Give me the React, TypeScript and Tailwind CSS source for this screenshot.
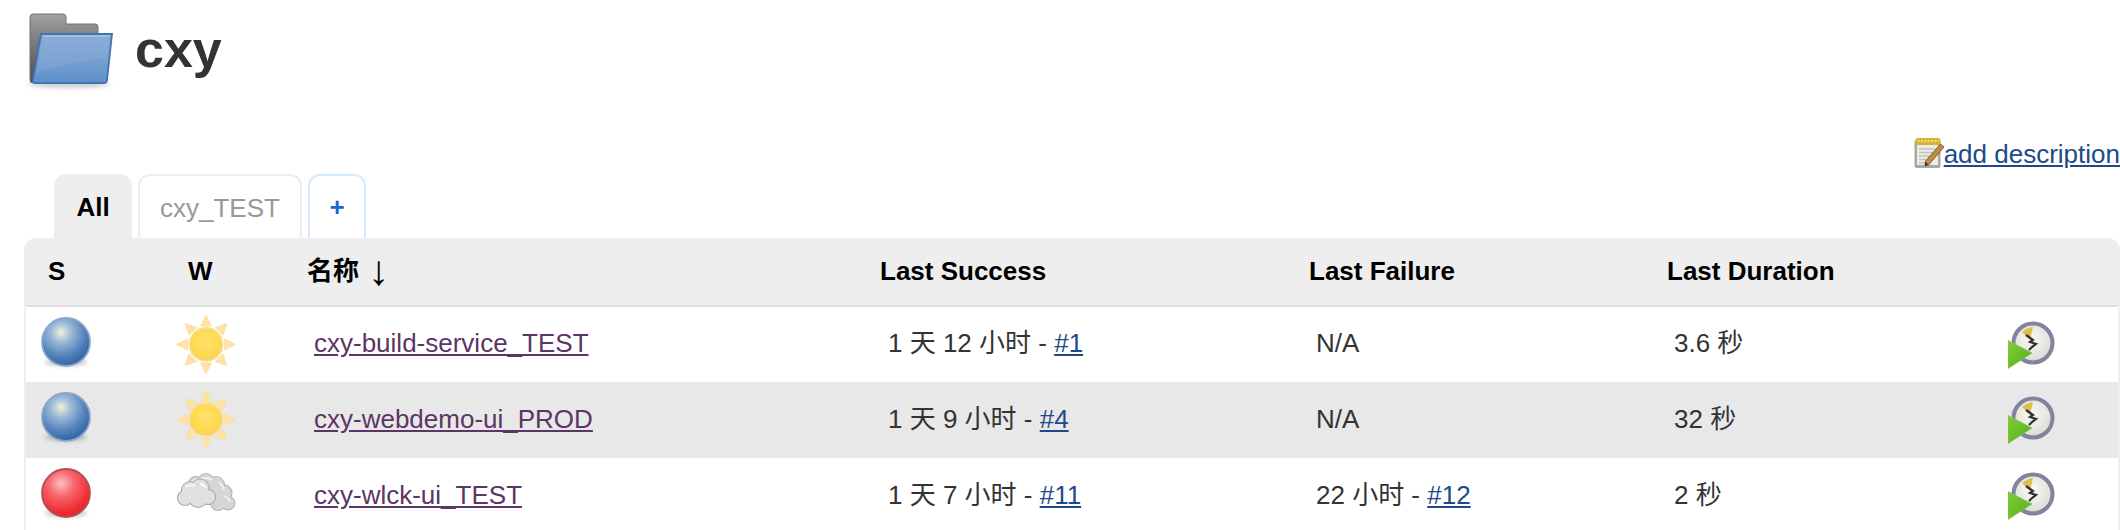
import React, { useId } from "react";

function Blur({ id, d = 0.5 }: { id: string; d?: number }) {
  return (
    <filter id={id} x="-10%" y="-10%" width="120%" height="120%">
      <feGaussianBlur stdDeviation={d} />
    </filter>
  );
}

function FolderIcon() {
  const id = useId();
  return (
    <svg width="92" height="84" viewBox="0 0 92 84" className="block shrink-0">
      <defs>
        <linearGradient id={id + "b"} x1="0" y1="0" x2="0" y2="1">
          <stop offset="0" stopColor="#a2a2a2" />
          <stop offset="0.35" stopColor="#808080" />
          <stop offset="1" stopColor="#4f4f4f" />
        </linearGradient>
        <linearGradient id={id + "f"} x1="0" y1="0" x2="0" y2="1">
          <stop offset="0" stopColor="#81a8d5" />
          <stop offset="0.6" stopColor="#739dd0" />
          <stop offset="1" stopColor="#5f8fc9" />
        </linearGradient>
        <filter id={id + "s"} x="-20%" y="-100%" width="140%" height="300%">
          <feGaussianBlur stdDeviation="2.500" />
        </filter>
        <Blur id={id + "g"} d={0.5} />
      </defs>
      <ellipse cx="46" cy="73" rx="42" ry="3.500" fill="#000" opacity="0.22" filter={`url(#${id}s)`} />
      <g filter={`url(#${id}g)`}>
        <path d="M7 6 Q7 3 10 3 H40 Q43 3 43 6 V13 H72 Q75 13 75 16 V40 L11 72 H10 Q7 72 7 69 Z" fill={`url(#${id}b)`} stroke="#707070" strokeWidth="1" />
        <path d="M18 23 H89 L84 69 Q83.500 72 81 72 H12 Q9 72 10 69 Z" fill={`url(#${id}f)`} stroke="#4273b3" strokeWidth="1.800" />
        <path d="M20 25 H87 L84.500 47 Q50 50 13 62 Z" fill="#fff" opacity="0.07" />
        <path d="M20 25 H87" stroke="#bcd2ea" strokeWidth="1.200" fill="none" />
      </g>
    </svg>
  );
}

function NoteIcon() {
  const id = useId();
  return (
    <svg width="30" height="32" viewBox="0 0 30 32" className="inline-block shrink-0 align-[-6px]">
      <defs>
        <Blur id={id + "g"} d={0.35} />
      </defs>
      <g filter={`url(#${id}g)`}>
        <rect x="0.500" y="3" width="26" height="28" rx="2" fill="#a8a8a2" />
        <rect x="3" y="6" width="21" height="22" fill="#ecece8" />
        <path d="M5 12 H22 M5 15.500 H20 M5 19 H16 M5 22.500 H12 M5 26 H12" stroke="#c2c2bc" strokeWidth="1.300" />
        <rect x="1.500" y="1" width="25" height="7" rx="2.500" fill="#d9ae34" />
        <path d="M3.500 4 H25" stroke="#f3dc7c" strokeWidth="2.500" strokeDasharray="2 1.400" />
        <path d="M26.500 7 L30 10 L15 27.500 L11 29 L11.500 24 Z" fill="#c18b3f" stroke="#6f4b1c" strokeWidth="0.800" />
        <path d="M11 29 L11.500 25 L14.500 27.500 Z" fill="#3a2c18" />
      </g>
    </svg>
  );
}

function Ball({ color }: { color: "blue" | "red" }) {
  const id = useId();
  const blue = color === "blue";
  return (
    <svg width="60" height="60" viewBox="0 0 60 60" className="block">
      <defs>
        <radialGradient id={id + "r"} cx="0.4" cy="0.3" r="0.75">
          {blue ? (
            <>
              <stop offset="0" stopColor="#eef2d6" />
              <stop offset="0.28" stopColor="#9db9d8" />
              <stop offset="0.65" stopColor="#5484bc" />
              <stop offset="1" stopColor="#2c5c9e" />
            </>
          ) : (
            <>
              <stop offset="0" stopColor="#fcc0c4" />
              <stop offset="0.35" stopColor="#f8686f" />
              <stop offset="0.8" stopColor="#f02c33" />
              <stop offset="1" stopColor="#dc252c" />
            </>
          )}
        </radialGradient>
        <filter id={id + "s"} x="-20%" y="-100%" width="140%" height="300%">
          <feGaussianBlur stdDeviation="2" />
        </filter>
        <Blur id={id + "g"} d={0.45} />
      </defs>
      <ellipse cx="30" cy="47" rx="21" ry="4" fill="#000" opacity="0.22" filter={`url(#${id}s)`} />
      <circle cx="30" cy="27" r="24" fill={`url(#${id}r)`} stroke={blue ? "#8aa6cc" : "#ae5156"} strokeWidth="1.800" filter={`url(#${id}g)`} />
    </svg>
  );
}

function Sun() {
  const id = useId();
  const rays = [0, 45, 90, 135, 180, 225, 270, 315];
  return (
    <svg width="60" height="60" viewBox="0 0 60 60" className="block">
      <defs>
        <radialGradient id={id + "r"} cx="0.5" cy="0.42" r="0.58">
          <stop offset="0" stopColor="#ffe26a" />
          <stop offset="0.75" stopColor="#fed94f" />
          <stop offset="1" stopColor="#fbc95c" />
        </radialGradient>
        <Blur id={id + "g"} d={0.55} />
      </defs>
      <g filter={`url(#${id}g)`}>
        {rays.map((a) => (
          <path key={a} d="M24.500 11 L30 0 L35.500 11 Z" fill="#fde3a6" stroke="#fcdc9c" strokeWidth="0.800" transform={`rotate(${a} 30 29.500)`} />
        ))}
        <circle cx="30" cy="29.500" r="16.500" fill={`url(#${id}r)`} stroke="#fbdc94" strokeWidth="1.800" />
      </g>
    </svg>
  );
}

function Cloud() {
  const id = useId();
  const back = [[30, 16, 8], [20, 18, 7], [40, 19, 8], [48, 27, 7.5], [52, 37, 6.5], [34, 26, 12], [42, 37, 7]];
  const front = [[9, 32, 7], [14, 24, 8], [24, 22, 8.5], [32, 31, 7], [22, 32, 9]];
  return (
    <svg width="60" height="60" viewBox="0 0 60 60" className="block">
      <defs>
        <Blur id={id + "g"} d={0.6} />
      </defs>
      <g filter={`url(#${id}g)`}>
        <g stroke="#b0b0ae" strokeWidth="2" fill="#b0b0ae">
          {back.map((c, i) => <circle key={i} cx={c[0]} cy={c[1]} r={c[2]} />)}
        </g>
        <g fill="#d6d6d4">
          {back.map((c, i) => <circle key={i} cx={c[0]} cy={c[1]} r={c[2]} />)}
        </g>
        <path d="M24 14 Q30 10 36 14 M42 16 Q47 19 48 24 M48 30 Q53 32 54 36 M16 15 Q20 13 24 14" stroke="#f2f2f0" strokeWidth="1.800" fill="none" />
        <g fill="#a8a8a6">
          {front.map((c, i) => <circle key={i} cx={c[0]} cy={c[1]} r={c[2] + 1} />)}
        </g>
        <g fill="#e0e0de">
          {front.map((c, i) => <circle key={i} cx={c[0]} cy={c[1]} r={c[2]} />)}
        </g>
        <path d="M10 21 Q14 18 19 20 M24 18 Q28 18 30 22" stroke="#fafafa" strokeWidth="1.800" fill="none" />
      </g>
    </svg>
  );
}

function BuildIcon() {
  const id = useId();
  return (
    <svg width="50" height="50" viewBox="0 0 50 50" className="block">
      <defs>
        <radialGradient id={id + "f"} cx="0.45" cy="0.4" r="0.6">
          <stop offset="0" stopColor="#fbfbf6" />
          <stop offset="1" stopColor="#dadad6" />
        </radialGradient>
        <linearGradient id={id + "t"} x1="0" y1="0" x2="1" y2="1">
          <stop offset="0" stopColor="#7fd030" />
          <stop offset="1" stopColor="#53ad1e" />
        </linearGradient>
        <Blur id={id + "g"} d={0.7} />
      </defs>
      <g filter={`url(#${id}g)`}>
        <circle cx="25" cy="23" r="19.500" fill={`url(#${id}f)`} stroke="#85829f" strokeWidth="4" />
        <path d="M22 20 L14 12 Q20 7 25 7 Z" fill="#dcbf52" />
        <path d="M18 15 L25 20 L22 22 L28 24 L24 27 L21 30" stroke="#333" strokeWidth="2.200" fill="none" />
      </g>
      <path d="M0 20.500 L24 33 L0 48.500 Z" fill={`url(#${id}t)`} stroke="#8cbf6a" strokeWidth="0.800" />
    </svg>
  );
}

type Job = {
  name: string;
  ball: "blue" | "red";
  weather: "sun" | "cloud";
  success: string;
  successNo: string;
  failure: string;
  failureNo?: string;
  duration: string;
};

const jobs: Job[] = [
  { name: "cxy-build-service_TEST", ball: "blue", weather: "sun", success: "1 天 12 小时 - ", successNo: "#1", failure: "N/A", duration: "3.6 秒" },
  { name: "cxy-webdemo-ui_PROD", ball: "blue", weather: "sun", success: "1 天 9 小时 - ", successNo: "#4", failure: "N/A", duration: "32 秒" },
  { name: "cxy-wlck-ui_TEST", ball: "red", weather: "cloud", success: "1 天 7 小时 - ", successNo: "#11", failure: "22 小时 - ", failureNo: "#12", duration: "2 秒" },
];

export default function App() {
  return (
    <div className="h-[530px] w-[2120px] overflow-hidden bg-white text-[26px] leading-[30px] text-[#333] [font-family:'Liberation_Sans','Noto_Sans_CJK_SC',sans-serif]">
      <div className="flex h-[100px] items-start pl-[23px] pt-[11px]">
        <FolderIcon />
        <h1 className="ml-[20px] text-[52px] leading-[76px] font-bold text-[#333]">cxy</h1>
      </div>
      <div className="mt-[37px] flex h-[37px] justify-end">
        <div className="whitespace-nowrap">
          <NoteIcon />
          <a href="#" className="text-[#204a87] underline">add description</a>
        </div>
      </div>
      <div className="flex h-[64px] gap-[6px] pl-[54px]">
        <div className="flex w-[78px] items-center justify-center rounded-t-[12px] bg-[#eeeeee] pt-[1px] font-bold text-black">All</div>
        <div className="flex w-[164px] items-center justify-center rounded-t-[12px] border-2 border-b-0 border-[#eeeeee] pt-[1px] text-[#999999]">cxy_TEST</div>
        <div className="flex w-[58px] items-center justify-center rounded-t-[12px] border-2 border-b-0 border-[#d6e9ff] font-bold text-[#1f63d4]">+</div>
      </div>
      <div className="ml-[24px] w-[2096px] overflow-hidden rounded-t-[12px] border-x-2 border-[#eeeeee]">
        <table className="w-[2092px] table-fixed border-collapse">
          <colgroup>
            <col className="w-[141px]" />
            <col className="w-[118px]" />
            <col className="w-[574px]" />
            <col className="w-[428px]" />
            <col className="w-[358px]" />
            <col className="w-[341px]" />
            <col className="w-[132px]" />
          </colgroup>
          <thead>
            <tr className="h-[68px] border-b-2 border-[#e0e0e0] bg-[#eeeeee] text-left text-black">
              <th className="pb-[2px] pl-[22px] font-bold">S</th>
              <th className="pb-[2px] pl-[21px] font-bold">W</th>
              <th className="pb-[2px] pl-[22px] font-bold">
                名称<span className="ml-[9px] align-[-5px] text-[42px] leading-[0] font-normal">↓</span>
              </th>
              <th className="pb-[2px] pl-[21px] font-bold">Last Success</th>
              <th className="pb-[2px] pl-[22px] font-bold">Last Failure</th>
              <th className="pb-[2px] pl-[22px] font-bold">Last Duration</th>
              <th />
            </tr>
          </thead>
          <tbody>
            {jobs.map((j, i) => (
              <tr key={j.name} className={i === 1 ? "h-[76px] bg-[#e8e8e8]" : "h-[76px]"}>
                <td className="pl-[10px]"><Ball color={j.ball} /></td>
                <td className="pl-[9px]">{j.weather === "sun" ? <Sun /> : <Cloud />}</td>
                <td className="pb-[3px] pl-[29px]"><a href="#" className="text-[#5c3566] underline">{j.name}</a></td>
                <td className="whitespace-pre pb-[3px] pl-[29px]">{j.success}<a href="#" className="text-[#204a87] underline">{j.successNo}</a></td>
                <td className="whitespace-pre pb-[3px] pl-[29px]">{j.failure}{j.failureNo && <a href="#" className="text-[#204a87] underline">{j.failureNo}</a>}</td>
                <td className="pb-[3px] pl-[29px]">{j.duration}</td>
                <td className="pl-[22px]"><BuildIcon /></td>
              </tr>
            ))}
          </tbody>
        </table>
      </div>
    </div>
  );
}
